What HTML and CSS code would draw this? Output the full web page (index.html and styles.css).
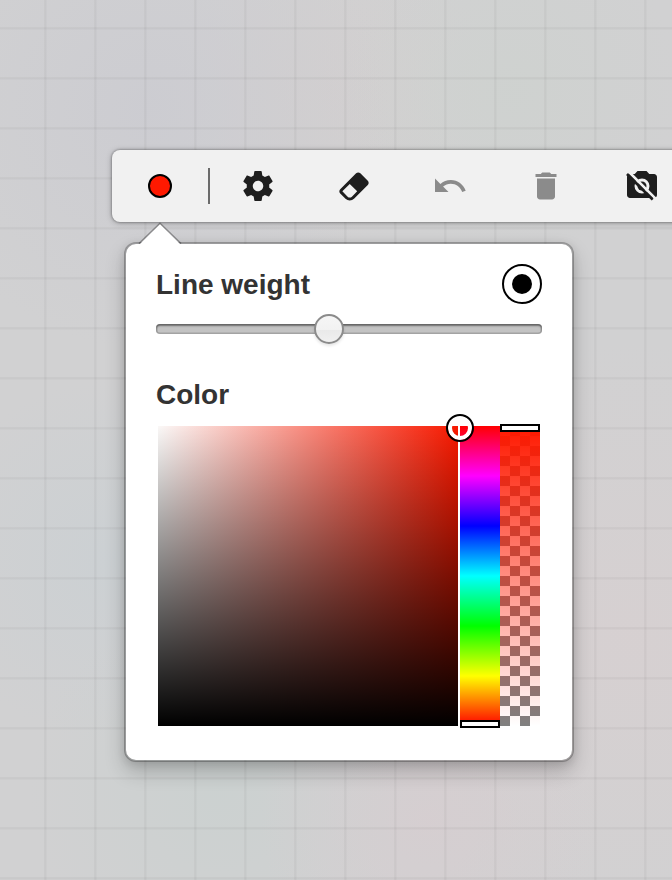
FILE: index.html
```html
<!DOCTYPE html>
<html lang="en">
<head>
<meta charset="utf-8">
<title>Drawing tools</title>
<link rel="stylesheet" href="styles.css">
</head>
<body>
<main class="canvas">
  <nav class="toolbar">
    <button class="tool tool-color" aria-label="Color"><span class="swatch"></span></button>
    <span class="divider"></span>
    <button class="tool" aria-label="Settings">
      <svg class="icon" viewBox="0 0 24 24"><path d="M19.43 12.98c.04-.32.07-.64.07-.98s-.03-.66-.07-.98l2.11-1.65c.19-.15.24-.42.12-.64l-2-3.46c-.12-.22-.39-.3-.61-.22l-2.49 1c-.52-.4-1.08-.73-1.69-.98l-.38-2.65C14.46 2.18 14.25 2 14 2h-4c-.25 0-.46.18-.49.42l-.38 2.65c-.61.25-1.17.59-1.69.98l-2.49-1c-.23-.09-.49 0-.61.22l-2 3.46c-.13.22-.07.49.12.64l2.11 1.65c-.04.32-.07.65-.07.98s.03.66.07.98l-2.11 1.65c-.19.15-.24.42-.12.64l2 3.46c.12.22.39.3.61.22l2.49-1c.52.4 1.08.73 1.69.98l.38 2.65c.03.24.24.42.49.42h4c.25 0 .46-.18.49-.42l.38-2.65c.61-.25 1.17-.59 1.69-.98l2.49 1c.23.09.49 0 .61-.22l2-3.46c.12-.22.07-.49-.12-.64l-2.11-1.65zM12 15.5c-1.93 0-3.5-1.57-3.5-3.5s1.57-3.5 3.5-3.5 3.5 1.57 3.5 3.5-1.57 3.5-3.5 3.5z"/></svg>
    </button>
    <button class="tool" aria-label="Eraser">
      <svg class="icon" viewBox="0 0 24 24"><path d="M16.24 3.56l4.95 4.94c.78.79.78 2.05 0 2.84L12 20.53a4.008 4.008 0 0 1-5.66 0L2.81 17c-.78-.79-.78-2.05 0-2.84l10.6-10.6c.79-.78 2.05-.78 2.83 0M4.22 15.58l3.54 3.53c.78.79 2.04.79 2.83 0l3.53-3.53-4.95-4.95-4.95 4.95z"/></svg>
    </button>
    <button class="tool tool-muted" aria-label="Undo">
      <svg class="icon" viewBox="0 0 24 24"><path d="M12.5 8c-2.65 0-5.05.99-6.9 2.6L2 7v9h9l-3.62-3.62c1.39-1.16 3.16-1.88 5.12-1.88 3.54 0 6.55 2.31 7.6 5.5l2.37-.78C21.08 11.03 17.15 8 12.5 8z"/></svg>
    </button>
    <button class="tool tool-muted" aria-label="Delete">
      <svg class="icon" viewBox="0 0 24 24"><path d="M6 19c0 1.1.9 2 2 2h8c1.1 0 2-.9 2-2V7H6v12zM19 4h-3.5l-1-1h-5l-1 1H5v2h14V4z"/></svg>
    </button>
    <button class="tool" aria-label="Camera off">
      <svg class="icon" viewBox="0 0 24 24">
        <path d="M9 2 7.17 4H4c-1.1 0-2 .9-2 2v12c0 1.1.9 2 2 2h16c1.1 0 2-.9 2-2V6c0-1.100-.9-2-2-2h-3.17L15 2H9zm3 15a5 5 0 1 1 0-10 5 5 0 0 1 0 10z"/>
        <circle cx="12" cy="12" r="3"/>
        <path class="slash-gap" d="M3.300 2.700 21 20.400"/>
        <path class="slash" d="M2 4 19.100 21.100"/>
      </svg>
    </button>
  </nav>

  <section class="popover">
    <svg class="arrow" viewBox="0 0 44 22"><path class="arrow-fill" d="M1 22 22 1 43 22z"/><path class="arrow-edge" d="M1 20.500 22 .2 43 20.500"/></svg>
    <header class="row">
      <h2 class="label">Line weight</h2>
      <span class="preview"><span class="preview-dot"></span></span>
    </header>
    <div class="slider"><span class="slider-thumb"></span></div>
    <h2 class="label label-color">Color</h2>
    <div class="picker">
      <div class="shade"></div>
      <div class="hue"><span class="bar-thumb thumb-bottom"></span></div>
      <div class="alpha"><span class="bar-thumb thumb-top"></span></div>
      <span class="ring"></span>
    </div>
  </section>
</main>
</body>
</html>
```
FILE: styles.css
```css
* { box-sizing: border-box; }

body {
  margin: 0;
  font-family: "Liberation Sans", Arial, sans-serif;
  color: #333;
}

.canvas {
  width: 672px;
  height: 880px;
  padding: 150px 0 0 112px;
  overflow: hidden;
  background:
    linear-gradient(90deg, rgba(0,0,0,.04) 1px, rgba(0,0,0,.02) 1px 2px, transparent 2px 49px, rgba(0,0,0,.03) 49px) -5px 0 / 50px 50px,
    linear-gradient(rgba(0,0,0,.04) 1px, rgba(0,0,0,.02) 1px 2px, transparent 2px 49px, rgba(0,0,0,.03) 49px) 0 -22px / 50px 50px,
    radial-gradient(circle at 150px 110px, rgba(203,203,209,.8), rgba(205,205,210,0) 240px),
    radial-gradient(circle at 510px 90px, rgba(206,210,207,.8), rgba(206,210,207,0) 170px),
    radial-gradient(circle at 430px 820px, rgba(215,205,208,.7), rgba(213,206,208,0) 170px),
    radial-gradient(circle at 220px 790px, rgba(203,209,208,.9), rgba(203,209,208,0) 190px),
    radial-gradient(circle at 110px 560px, rgba(203,208,211,.9), rgba(203,208,211,0) 180px),
    radial-gradient(circle at 630px 640px, rgba(215,208,209,.9), rgba(215,208,209,0) 300px),
    radial-gradient(circle at 330px 90px, rgba(211,207,207,.8), rgba(211,207,207,0) 160px),
    #d1d1d2;
}

.toolbar {
  display: flex;
  align-items: center;
  width: 600px;
  height: 72px;
  background: #f1f1f1;
  border-radius: 8px;
  box-shadow: 0 0 2px 1px rgba(0,0,0,.22), 0 1px 6px rgba(0,0,0,.25);
}

.tool {
  display: flex;
  flex: none;
  align-items: center;
  justify-content: center;
  width: 96px;
  height: 72px;
  padding: 0;
  border: 0;
  background: none;
  color: #1e1e1e;
}
.tool-muted { color: #8b8b8b; }

.swatch {
  width: 24px;
  height: 24px;
  border: 2px solid #000;
  border-radius: 50%;
  background: #ff1900;
}

.divider {
  flex: none;
  width: 2px;
  height: 36px;
  background: #6b6b6b;
}

.icon { width: 36px; height: 36px; fill: currentColor; overflow: visible; }
.slash { stroke: currentColor; stroke-width: 1.8; }
.slash-gap { stroke: #f1f1f1; stroke-width: 1.8; }

.popover {
  position: relative;
  width: 450px;
  height: 520px;
  margin: 20px 0 0 12px;
  padding: 20px 30px 0;
  border: 2px solid rgba(0,0,0,.25);
  border-radius: 12px;
  background: #fff;
  background-clip: padding-box;
  box-shadow: 0 10px 20px rgba(0,0,0,.2), 0 2px 8px rgba(0,0,0,.1);
}

.arrow { position: absolute; left: 12px; top: -21px; width: 44px; height: 22px; overflow: visible; }
.arrow-fill { fill: #fff; }
.arrow-edge { fill: none; stroke: rgba(0,0,0,.32); stroke-width: 1.5; }

.row { display: flex; justify-content: space-between; align-items: center; height: 40px; }

.label { margin: 0; padding-top: 1px; font-size: 28px; line-height: 40px; font-weight: 700; }
.row .label { padding-top: 2px; }
.label-color { margin-top: 40px; }

.preview {
  display: flex;
  align-items: center;
  justify-content: center;
  width: 40px;
  height: 40px;
  border: 2px solid #000;
  border-radius: 50%;
}
.preview-dot { width: 20px; height: 20px; border-radius: 50%; background: #000; }

.slider {
  position: relative;
  height: 10px;
  margin-top: 20px;
  border-radius: 4px;
  background: #c3c3c3;
  box-shadow: inset 0 0 0 1.5px rgba(0,0,0,.16), inset 0 2px 2px rgba(0,0,0,.38);
}
.slider-thumb {
  position: absolute;
  left: 158px;
  top: -10px;
  width: 30px;
  height: 30px;
  border: 2px solid #8b8b8b;
  border-radius: 50%;
  background: linear-gradient(#f6f6f6, #f2f2f2 52%, #e9e9e9 52%, #f0f0f0);
  box-shadow: 0 2px 3px rgba(0,0,0,.1);
}

.picker {
  position: relative;
  display: grid;
  grid-template-columns: 300px 40px 40px;
  height: 300px;
  margin: 11px 0 0 2px;
}
.shade {
  background: linear-gradient(transparent, #000), linear-gradient(90deg, #faf8f7, #f81900);
}
.hue {
  position: relative;
  margin-left: 2px;
  margin-right: -2px;
  background: linear-gradient(#f00, #f0f, #00f, #0ff, #0f0, #ff0, #f00);
}
.alpha {
  position: relative;
  margin-left: 2px;
  margin-right: -2px;
  background:
    linear-gradient(#ff1900, rgba(255,25,0,0)),
    conic-gradient(#fff 25%, #808080 0 50%, #fff 0 75%, #808080 0) 0 10px / 20px 20px;
}
.bar-thumb {
  position: absolute;
  left: 0;
  width: 40px;
  height: 8px;
  border: 2px solid #000;
  background: #fff;
}
.thumb-top { top: -2px; }
.thumb-bottom { bottom: -2px; }

.ring {
  position: absolute;
  left: 288px;
  top: -12px;
  width: 28px;
  height: 28px;
  border: 2px solid #000;
  border-radius: 50%;
  box-shadow: inset 0 0 0 4px #fff;
}
```
